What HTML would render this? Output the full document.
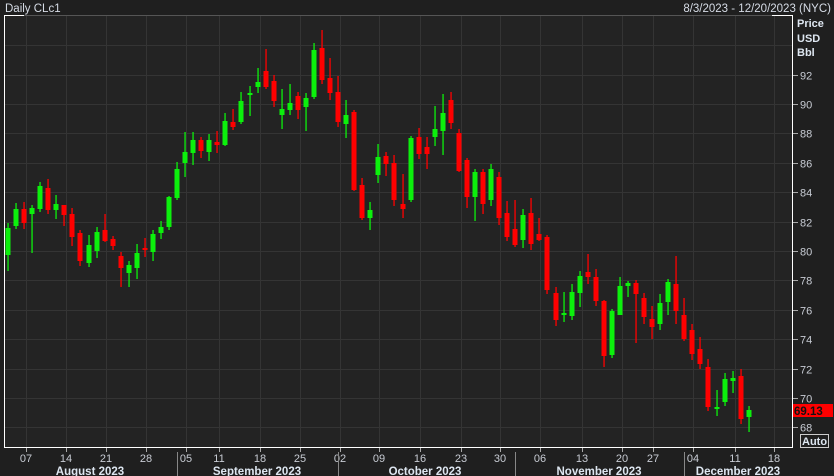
<!DOCTYPE html>
<html><head><meta charset="utf-8"><style>
body{margin:0;background:#1f1f1f;width:834px;height:476px;overflow:hidden;font-family:"Liberation Sans",sans-serif}
svg{display:block}
</style></head><body>
<svg width="834" height="476" xmlns="http://www.w3.org/2000/svg" font-family="Liberation Sans, sans-serif">
<rect x="0" y="0" width="834" height="476" fill="#1f1f1f"/>
<rect x="4" y="15" width="789" height="432" fill="#232323"/>
<g stroke="#343434" stroke-width="1" id="grid"></g>
<g id="candles"></g>
<line x1="4" y1="15.5" x2="793" y2="15.5" stroke="#555" />
<line x1="4" y1="15.5" x2="24" y2="15.5" stroke="#fff" />
<line x1="772" y1="15.5" x2="793" y2="15.5" stroke="#fff" />
<line x1="4.5" y1="15" x2="4.5" y2="447" stroke="#fff"/>
<line x1="792.5" y1="15" x2="792.5" y2="448" stroke="#fff"/>
<line x1="4" y1="447.5" x2="793" y2="447.5" stroke="#fff"/>
<g id="xt" fill="#c8ccd4" font-size="11" text-anchor="middle"></g>
<g id="yt" fill="#c8ccd4" font-size="11"></g>
<text x="5" y="12" fill="#d6dce6" font-size="11.5">Daily CLc1</text>
<text x="831" y="12" fill="#d6dce6" font-size="11.5" text-anchor="end">8/3/2023 - 12/20/2023 (NYC)</text>
<text x="797" y="27" fill="#dde6f0" font-size="11" font-weight="bold">Price</text>
<text x="797" y="42" fill="#dde6f0" font-size="11" font-weight="bold">USD</text>
<text x="797" y="56" fill="#dde6f0" font-size="11" font-weight="bold">Bbl</text>
<rect x="793" y="404" width="40" height="13" fill="#ff0000"/>
<text x="794" y="415" fill="#111" font-size="11.5" font-weight="bold">69.13</text>
<rect x="800.5" y="434.5" width="28" height="13" fill="none" stroke="#ccc"/>
<text x="802" y="445" fill="#dde6f0" font-size="11" font-weight="bold">Auto</text>
<g fill="#dde6f0" font-size="11.5" font-weight="bold" text-anchor="middle">
<text x="90" y="475">August 2023</text><text x="257" y="475">September 2023</text><text x="425" y="475">October 2023</text><text x="599" y="475">November 2023</text><text x="738" y="475">December 2023</text>
</g>
<g stroke="#888"><line x1="177.5" y1="452" x2="177.5" y2="476"/><line x1="338.5" y1="452" x2="338.5" y2="476"/><line x1="515.5" y1="452" x2="515.5" y2="476"/><line x1="684.5" y1="452" x2="684.5" y2="476"/></g>
</svg>
<script>
const NS="http://www.w3.org/2000/svg";
function el(p,t,a,txt){const e=document.createElementNS(NS,t);for(const k in a)e.setAttribute(k,a[k]);if(txt)e.textContent=txt;document.getElementById(p).appendChild(e);}
const xs=[[26,"07"],[66,"14"],[106,"21"],[146,"28"],[186,"05"],[219,"11"],[260,"18"],[300,"25"],[340,"02"],[379,"09"],[420,"16"],[461,"23"],[500,"30"],[540,"06"],[582,"13"],[622,"20"],[653,"27"],[693,"04"],[735,"11"],[774,"18"]];
xs.forEach(([x,t])=>{el("grid","line",{x1:x+.5,y1:16,x2:x+.5,y2:447});el("grid","line",{x1:x+.5,y1:448,x2:x+.5,y2:452,stroke:"#aaa"});el("xt","text",{x:x,y:462},t);});
for(let p=68;p<=94;p+=2){const y=Math.round(251-(p-80)*14.7)+.5;el("grid","line",{x1:5,y1:y,x2:792,y2:y});if(p<=92){el("grid","line",{x1:793,y1:y,x2:798,y2:y,stroke:"#aaa"});el("yt","text",{x:800,y:y+4},String(p));}}
const C=[[8,"G",228,255,223,271],[16,"G",209,226,203,229],[24,"R",209,223,202,229],[32,"G",208,214,205,253],[40,"G",186,209,182,212],[48,"R",188,210,179,214],[56,"G",204,210,195,219],[64,"R",205,215,205,226],[72,"R",214,237,208,246],[80,"R",233,261,230,266],[89,"G",245,263,235,267],[97,"G",232,251,227,258],[105,"R",230,241,214,242],[113,"R",239,246,236,250],[121,"R",256,268,252,287],[129,"G",265,273,261,287],[137,"G",253,268,244,279],[145,"R",248,250,238,257],[153,"G",234,252,230,261],[161,"G",227,233,221,239],[169,"G",197,227,196,230],[177,"G",169,198,162,200],[185,"G",152,163,132,177],[193,"G",140,153,132,165],[201,"R",140,151,137,158],[209,"G",140,152,134,161],[217,"R",142,145,131,153],[225,"G",121,145,113,146],[233,"R",122,127,109,130],[241,"G",101,122,92,124],[250,"G",93,95,86,116],[258,"G",82,87,68,93],[266,"R",71,87,49,89],[274,"R",81,101,75,107],[282,"G",109,115,89,129],[290,"G",103,110,84,115],[298,"R",96,110,92,119],[306,"G",98,107,93,131],[314,"G",50,97,43,99],[322,"R",48,80,30,84],[330,"R",78,93,58,100],[338,"R",92,122,76,127],[346,"G",115,124,100,138],[354,"R",112,190,110,191],[362,"R",185,218,178,220],[370,"G",210,218,202,230],[378,"G",157,175,144,183],[386,"R",156,164,152,176],[394,"R",163,200,155,206],[403,"R",204,209,174,218],[411,"G",138,200,136,202],[419,"R",137,154,128,159],[427,"R",147,154,137,169],[435,"G",129,137,106,146],[443,"G",113,131,94,155],[451,"R",100,123,92,129],[459,"R",133,171,129,172],[467,"R",160,197,158,208],[475,"G",172,197,169,221],[483,"R",172,204,169,214],[491,"G",169,200,164,206],[499,"R",177,218,172,225],[507,"R",213,237,201,241],[515,"R",229,245,200,247],[523,"G",215,240,209,248],[531,"R",213,244,198,250],[539,"R",234,240,218,241],[547,"R",237,290,235,294],[556,"R",293,320,287,326],[564,"G",313,315,292,322],[572,"G",292,316,284,320],[580,"G",276,293,271,307],[588,"R",272,277,254,284],[596,"R",277,301,269,306],[604,"R",301,356,300,367],[612,"G",311,355,309,358],[620,"G",286,315,277,315],[628,"G",283,286,281,297],[636,"R",283,294,280,343],[644,"R",298,317,293,324],[652,"R",319,327,306,339],[660,"G",303,324,294,330],[668,"G",282,302,279,315],[676,"R",284,311,256,324],[684,"R",315,339,298,341],[692,"R",330,354,324,360],[700,"R",349,364,337,369],[708,"R",367,407,359,411],[717,"G",407,409,390,416],[725,"G",379,402,373,406],[733,"G",378,381,371,393],[741,"R",376,419,369,424],[749,"G",410,417,406,432]];
C.forEach(([x,c,bt,bb,wt,wb])=>{const col=c==="G"?"#0cf00c":"#ff0000";el("candles","rect",{x:x-0.6,y:wt,width:1.3,height:wb-wt,fill:col});el("candles","rect",{x:x-2.5,y:bt,width:5,height:Math.max(2,bb-bt),fill:col});});
</script>
</body></html>
